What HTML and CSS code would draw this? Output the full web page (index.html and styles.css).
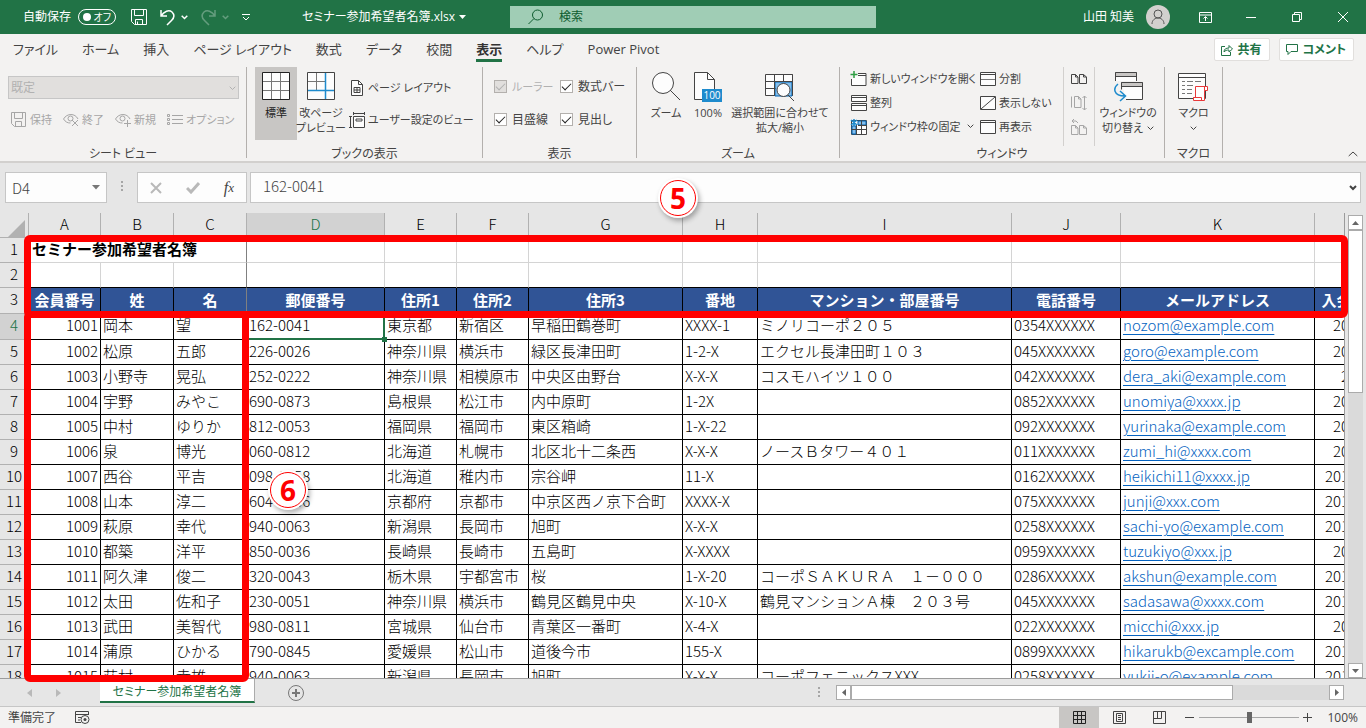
FILE: index.html
```
<!DOCTYPE html>
<html lang="ja">
<head>
    <meta charset="UTF-8">
    <meta name="viewport" content="width=device-width, initial-scale=1.0">
    <title>セミナー参加希望者名簿.xlsx</title>
    <link rel="stylesheet" href="styles.css">
</head>
<body>
    <!-- タイトルバー -->
    <header class="titlebar">
        <div class="quick">
            <label class="autosave">自動保存 <span class="toggle"><input type="checkbox"><span class="toggle-text">オフ</span></span></label>
            <button class="q-save" aria-label="上書き保存"><svg width="16" height="16" viewBox="0 0 16 16"><path d="M.5.5h15v15h-12l-3-3zM3.500.5v6h9v-6M4.500 15.500v-5h7v5M6.500 15v-2.500"/></svg></button>
            <button class="q-undo" aria-label="元に戻す"><svg width="15" height="17" viewBox="0 0 15 17"><path class="w" d="M1 1v6h6M1 7C4 2 9 .500 12 3c3 3 2 6-.500 8.500L7 16"/></svg></button>
            <button class="q-arrow" aria-label="元に戻す一覧"><svg width="7" height="5" viewBox="0 0 7 5"><path class="w" d="M.700.700l2.800 2.800L6.300.700"/></svg></button>
            <button class="q-redo dim" aria-label="やり直し" disabled><svg width="15" height="17" viewBox="0 0 15 17"><path class="w" d="M14 1v6H8M14 7C11 2 6 .500 3 3c-3 3-2 6 .500 8.500L8 16"/></svg></button>
            <button class="q-arrow dim" aria-label="やり直し一覧" disabled><svg width="7" height="5" viewBox="0 0 7 5"><path class="w" d="M.700.700l2.800 2.800L6.300.700"/></svg></button>
            <button class="q-custom" aria-label="クイックアクセスのカスタマイズ"><svg width="8" height="7" viewBox="0 0 8 7"><path d="M0 .500h8M1 3l3 3 3-3"/></svg></button>
        </div>
        <button class="filename">セミナー参加希望者名簿.xlsx <svg width="7" height="4" viewBox="0 0 7 4"><path class="solid" d="M0 0h7L3.500 4z"/></svg></button>
        <div class="search">
            <svg width="16" height="16" viewBox="0 0 16 16"><circle cx="9.500" cy="6" r="5"/><path d="M6 9.500L.500 15"/></svg>
            <input type="text" placeholder="検索" aria-label="検索">
        </div>
        <div class="window">
            <span class="user">山田 知美</span>
            <svg class="avatar" width="24" height="24" viewBox="0 0 24 24"><circle class="face" cx="12" cy="12" r="12"/><circle cx="12" cy="9" r="4"/><path d="M6 19c0-8 12-8 12 0"/></svg>
            <button aria-label="リボンの表示オプション"><svg width="13" height="11" viewBox="0 0 13 11"><path d="M.500.500h12v10H.500zM.500 3h12M6.500 9V5M4.500 6.500l2-2 2 2"/></svg></button>
            <button aria-label="最小化"><svg width="10" height="10" viewBox="0 0 10 10"><path d="M0 5.500h10"/></svg></button>
            <button aria-label="元に戻す(縮小)"><svg width="10" height="10" viewBox="0 0 10 10"><path d="M.500 2.500h7v7h-7zM2.500 2.500v-2h7v7h-2"/></svg></button>
            <button aria-label="閉じる"><svg width="10" height="10" viewBox="0 0 10 10"><path d="M0 0l10 10M10 0L0 10"/></svg></button>
        </div>
    </header>

    <!-- タブ -->
    <nav class="tabs">
        <a href="#">ファイル</a>
        <a href="#">ホーム</a>
        <a href="#">挿入</a>
        <a href="#">ページ レイアウト</a>
        <a href="#">数式</a>
        <a href="#">データ</a>
        <a href="#">校閲</a>
        <a href="#" class="active">表示</a>
        <a href="#">ヘルプ</a>
        <a href="#">Power Pivot</a>
        <div class="share">
            <button><svg width="12" height="12" viewBox="0 0 12 12"><path d="M4 2.500H.500v9h9V8M3 8c0-3 2-4 5-4V1.500L11.500 5 8 8V6C6 6 4 6.500 3 8z"/></svg>共有</button>
            <button><svg width="12" height="11" viewBox="0 0 12 11"><path d="M.500.500h11v7H5l-3 3v-3H.500z"/></svg>コメント</button>
        </div>
    </nav>

    <!-- リボン -->
    <section class="ribbon">
        <div class="group g-sheetview">
            <div class="group-body">
                <div class="select-box">
                    <select aria-label="シート ビュー" disabled><option>既定</option></select>
                    <svg width="7" height="5" viewBox="0 0 7 5"><path d="M.700.700l2.800 2.800L6.300.700"/></svg>
                </div>
                <div class="sv-buttons">
                    <button class="small" disabled><svg width="16" height="16" viewBox="0 0 16 16"><path d="M.500.500h14v14h-11l-3-3zM3.500.500v6h8v-6M4.500 14.500v-5h6v5"/></svg>保持</button>
                    <button class="small" disabled><svg width="16" height="14" viewBox="0 0 16 14"><path d="M.500 6C4 0 12 0 15 6M.500 6c2 3 4 4 7 4"/><circle cx="7.500" cy="5.500" r="2.500"/><path d="M9 7l6 6M15 7l-6 6"/></svg>終了</button>
                    <button class="small" disabled><svg width="16" height="14" viewBox="0 0 16 14"><path d="M.500 6C4 0 12 0 15 6M.500 6c2 3 4 4 7 4"/><circle cx="7.500" cy="5.500" r="2.500"/><path d="M12.500 7v7M9 10.500h7"/></svg>新規</button>
                    <button class="small" disabled><svg width="16" height="12" viewBox="0 0 16 12"><path d="M.500.500h2v2h-2zM.500 4.500h2v2h-2zM.500 8.500h2v2h-2zM5 1.500h11M5 5.500h11M5 9.500h11"/></svg>オプション</button>
                </div>
            </div>
            <h2>シート ビュー</h2>
        </div>

        <div class="group g-bookview">
            <div class="group-body">
                <button class="big on"><svg width="28" height="28" viewBox="0 0 28 28"><path class="paper" d="M.500.500h27v27H.500z"/><path class="thin" d="M9.500 1v26M18.500 1v26M1 9.500h26M1 18.500h26"/></svg><span>標準</span></button>
                <button class="big"><svg width="28" height="28" viewBox="0 0 28 28"><path class="paper" d="M.500.500h27v27H.500z"/><path class="thin" d="M9.500 1v17M1 9.500h17"/><path class="blue" d="M18.500 1v26M1 18.500h26"/></svg><span>改ページ<br>プレビュー</span></button>
                <div class="stack">
                    <button class="small"><svg width="16" height="16" viewBox="0 0 16 16"><path class="paper" d="M2.500.500h7l4 4v11h-11z"/><path d="M9.500.500v4h4M5 7.500h6v5H5zM8 7.500v5M5 10h6"/></svg>ページ レイアウト</button>
                    <button class="small"><svg width="16" height="16" viewBox="0 0 16 16"><path class="paper" d="M4.500 4.500h11v11h-11z"/><path d="M0 4.500h3M0 15.500h3M1.500 4.500v11M4.500 0v3M15.500 0v3M4.500 1.500h11M7 7h6v2H7z"/></svg>ユーザー設定のビュー</button>
                </div>
            </div>
            <h2>ブックの表示</h2>
        </div>

        <div class="group g-show">
            <div class="group-body">
                <label class="off"><input type="checkbox" checked disabled>ルーラー</label>
                <label><input type="checkbox" checked>数式バー</label>
                <label><input type="checkbox" checked>目盛線</label>
                <label><input type="checkbox" checked>見出し</label>
            </div>
            <h2>表示</h2>
        </div>

        <div class="group g-zoom">
            <div class="group-body">
                <button class="big"><svg width="30" height="30" viewBox="0 0 30 30"><circle class="paper" cx="12" cy="11" r="10.500"/><path d="M19 18l10 10"/></svg><span>ズーム</span></button>
                <button class="big"><svg width="28" height="30" viewBox="0 0 28 30"><path class="paper" d="M.500.500h13l7 7v20H.500z"/><path d="M13.500.500v7h7"/><path class="bluefill" d="M8 17h20v13H8z"/><text x="18" y="27" class="hundred">100</text></svg><span>100%</span></button>
                <button class="big"><svg width="30" height="28" viewBox="0 0 30 28"><path class="paper" d="M.500 1.500h27v21H.500z"/><path class="pale" d="M10 9h17v14H10z"/><path d="M9.500 1.500v21M18.500 1.500v7M.500 8.500h27M.500 15.500h10M27.500 1.500v21"/><circle class="paper" cx="18.500" cy="17" r="6.500"/><path d="M23 22l6 6"/></svg><span>選択範囲に合わせて<br>拡大/縮小</span></button>
            </div>
            <h2>ズーム</h2>
        </div>

        <div class="group g-window">
            <div class="group-body">
                <div class="stack3">
                    <button class="small"><svg width="17" height="16" viewBox="0 0 17 16"><path class="paper" d="M8 2.500h8v12H1.500V8"/><path d="M8 4.500h8"/><path class="green" d="M4 0v7M.500 3.500h7"/></svg>新しいウィンドウを開く</button>
                    <button class="small"><svg width="17" height="16" viewBox="0 0 17 16"><path class="paper" d="M1.500.500h15v6h-15zM1.500 8.500h15v7h-15z"/><path d="M1.500 2.500h15M1.500 10.500h15"/></svg>整列</button>
                    <button class="small"><svg width="17" height="16" viewBox="0 0 17 16"><path class="paper" d="M1.500 1.500h15v14h-15z"/><path class="pale" d="M8 2h8v4H8zM2 7h4v8H2z"/><path d="M6.500 6v10M11.500 1.500v14M8 6.500h8M1.500 10.500h15"/><path class="blue" d="M4 0v7M1 1l6 5M7 1L1 6"/></svg>ウィンドウ枠の固定<svg class="chev" width="7" height="5" viewBox="0 0 7 5"><path d="M.700.700l2.800 2.800L6.300.700"/></svg></button>
                </div>
                <div class="stack3 second">
                    <button class="small"><svg width="16" height="14" viewBox="0 0 16 14"><path class="paper" d="M.500.500h15v13H.500z"/><path d="M.500 2.500h15"/><path class="thin" d="M1 7.500h14"/></svg>分割</button>
                    <button class="small"><svg width="16" height="14" viewBox="0 0 16 14"><path class="paper" d="M.500.500h15v13H.500z"/><path d="M1 13L15 1"/></svg>表示しない</button>
                    <button class="small"><svg width="16" height="14" viewBox="0 0 16 14"><path class="paper" d="M.500.500h15v13H.500z"/><path d="M.500 2.500h15"/></svg>再表示</button>
                </div>
                <div class="side">
                    <button class="small" aria-label="並べて比較"><svg width="16" height="16" viewBox="0 0 16 16"><path d="M.500 3.500h4l2.500 2.500v6.500H.500zM4.500 3.500V6H7M8.500 3.500h4L15.500 6v6.500h-7zM12.500 3.500V6h3"/></svg></button>
                    <button class="small" aria-label="同時にスクロール" disabled><svg width="16" height="16" viewBox="0 0 16 16"><path d="M.500 1.500v11M3.500 1.500h4L10 4v8.500H3.500zM7.500 1.500V4H10M13.500 1v14M11.500 3l2-2 2 2M11.500 13l2 2 2-2"/></svg></button>
                    <button class="small" aria-label="ウィンドウの位置を元に戻す" disabled><svg width="16" height="16" viewBox="0 0 16 16"><path d="M.500 6.500h4L7 9v6.500H.500zM4.500 6.500V9H7M8.500 6.500h4L15.500 9v6.500h-7zM12.500 6.500V9h3M3 0L1 2l2 2M1 2h4l2 2"/></svg></button>
                </div>
                <button class="big"><svg width="30" height="30" viewBox="0 0 30 30"><path class="paper" d="M2.500 9V.500h21V9"/><path class="gray" d="M3 1h20v3H3z"/><path class="paper" d="M8.500 10.500h21v17H13"/><path class="gray" d="M9 11h20v3H9z"/><path d="M2.500.500h21M2.500 4.500h21M8.500 10.500h21M8.500 14.500h21M8.500 10.500v7"/><path class="blue" d="M5 12c-5 4-5 12 7 12M7 19l5.500 5L7 29"/></svg><span>ウィンドウの<br>切り替え<svg class="chev" width="7" height="5" viewBox="0 0 7 5"><path d="M.700.700l2.800 2.800L6.300.700"/></svg></span></button>
            </div>
            <h2>ウィンドウ</h2>
        </div>

        <div class="group g-macro">
            <div class="group-body">
                <button class="big"><svg width="30" height="30" viewBox="0 0 30 30"><path class="paper" d="M.500 1.500h27v25H.500z"/><path d="M.500 5.500h27"/><path class="thin" d="M4 9.500h3M9 9.500h6M17 9.500h6M4 13.500h3M9 13.500h6M4 17.500h3M9 17.500h5M4 21.500h3M9 21.500h5"/><path class="red" d="M17.500 14.500h12v4h-3v10h-11v-3h2zM15.500 25.500h8v3M26.500 18.500v-4"/></svg><span>マクロ</span><svg class="chev alone" width="7" height="5" viewBox="0 0 7 5"><path d="M.700.700l2.800 2.800L6.300.700"/></svg></button>
            </div>
            <h2>マクロ</h2>
        </div>
        <button class="collapse" aria-label="リボンを折りたたむ"><svg width="10" height="6" viewBox="0 0 10 6"><path d="M.700 5L5 1l4.300 4"/></svg></button>
    </section>

    <!-- 数式バー -->
    <section class="formula">
        <div class="namebox">
            <input type="text" value="D4" aria-label="名前ボックス">
            <button aria-label="名前の一覧"><svg width="8" height="5" viewBox="0 0 8 5"><path class="solid" d="M0 0h8L4 4.500z"/></svg></button>
        </div>
        <span class="dots"></span>
        <div class="fx">
            <button aria-label="キャンセル" disabled><svg width="12" height="12" viewBox="0 0 12 12"><path d="M1 1l10 10M11 1L1 11"/></svg></button>
            <button aria-label="入力" disabled><svg class="tick" width="14" height="12" viewBox="0 0 14 12"><path d="M1 6l4 4 8-9"/></svg></button>
            <button class="fx-label" aria-label="関数の挿入"><i>f</i><sub>x</sub></button>
        </div>
        <div class="value">
            <input type="text" value="162-0041" aria-label="数式バー">
            <button aria-label="数式バーの展開"><svg width="8" height="6" viewBox="0 0 8 6"><path d="M1 1l3 3 3-3"/></svg></button>
        </div>
    </section>

    <!-- シート -->
    <main class="workspace">
        <div class="sheet">
            <table>
                <colgroup>
                    <col class="c-row"><col class="c-a"><col class="c-b"><col class="c-b"><col class="c-d"><col class="c-a"><col class="c-a"><col class="c-g"><col class="c-h"><col class="c-i"><col class="c-j"><col class="c-k"><col class="c-l">
                </colgroup>
                <thead>
                    <tr><th class="corner"><svg width="17" height="17" viewBox="0 0 17 17"><path class="solid" d="M17 0v17H0z"/></svg></th><th>A</th><th>B</th><th>C</th><th class="current">D</th><th>E</th><th>F</th><th>G</th><th>H</th><th>I</th><th>J</th><th>K</th><th></th></tr>
                </thead>
                <tbody>
                    <tr class="blank"><th>1</th><td class="title" colspan="3">セミナー参加希望者名簿</td><td></td><td></td><td></td><td></td><td></td><td></td><td></td><td></td><td></td></tr>
                    <tr class="blank last"><th>2</th><td></td><td></td><td class="freeze"></td><td></td><td></td><td></td><td></td><td></td><td></td><td></td><td></td><td></td></tr>
                    <tr class="fields"><th>3</th><td>会員番号</td><td>姓</td><td class="freeze">名</td><td>郵便番号</td><td>住所1</td><td>住所2</td><td>住所3</td><td>番地</td><td>マンション・部屋番号</td><td>電話番号</td><td>メールアドレス</td><td>入会年月日</td></tr>
                    <tr class="first"><th class="current">4</th><td>1001</td><td>岡本</td><td>望</td><td class="selected">162-0041</td><td>東京都</td><td>新宿区</td><td>早稲田鶴巻町</td><td>XXXX-1</td><td>ミノリコーポ２０５</td><td>0354XXXXXX</td><td><a href="#">nozom@example.com</a></td><td>2010/4/10</td></tr>
                    <tr><th>5</th><td>1002</td><td>松原</td><td>五郎</td><td>226-0026</td><td>神奈川県</td><td>横浜市</td><td>緑区長津田町</td><td>1-2-X</td><td>エクセル長津田町１０３</td><td>045XXXXXXX</td><td><a href="#">goro@example.com</a></td><td>2010/4/12</td></tr>
                    <tr><th>6</th><td>1003</td><td>小野寺</td><td>晃弘</td><td>252-0222</td><td>神奈川県</td><td>相模原市</td><td>中央区由野台</td><td>X-X-X</td><td>コスモハイツ１００</td><td>042XXXXXXX</td><td><a href="#">dera_aki@example.com</a></td><td>2010/5/6</td></tr>
                    <tr><th>7</th><td>1004</td><td>宇野</td><td>みやこ</td><td>690-0873</td><td>島根県</td><td>松江市</td><td>内中原町</td><td>1-2X</td><td></td><td>0852XXXXXX</td><td><a href="#">unomiya@xxxx.jp</a></td><td>2010/5/20</td></tr>
                    <tr><th>8</th><td>1005</td><td>中村</td><td>ゆりか</td><td>812-0053</td><td>福岡県</td><td>福岡市</td><td>東区箱崎</td><td>1-X-22</td><td></td><td>092XXXXXXX</td><td><a href="#">yurinaka@example.com</a></td><td>2010/6/14</td></tr>
                    <tr><th>9</th><td>1006</td><td>泉</td><td>博光</td><td>060-0812</td><td>北海道</td><td>札幌市</td><td>北区北十二条西</td><td>X-X-X</td><td>ノースＢタワー４０１</td><td>011XXXXXXX</td><td><a href="#">zumi_hi@xxxx.com</a></td><td>2010/7/22</td></tr>
                    <tr><th>10</th><td>1007</td><td>西谷</td><td>平吉</td><td>098-6758</td><td>北海道</td><td>稚内市</td><td>宗谷岬</td><td>11-X</td><td></td><td>0162XXXXXX</td><td><a href="#">heikichi11@xxxx.jp</a></td><td>2010/10/12</td></tr>
                    <tr><th>11</th><td>1008</td><td>山本</td><td>淳二</td><td>604-8366</td><td>京都府</td><td>京都市</td><td>中京区西ノ京下合町</td><td>XXXX-X</td><td></td><td>075XXXXXXX</td><td><a href="#">junji@xxx.com</a></td><td>2010/10/25</td></tr>
                    <tr><th>12</th><td>1009</td><td>萩原</td><td>幸代</td><td>940-0063</td><td>新潟県</td><td>長岡市</td><td>旭町</td><td>X-X-X</td><td></td><td>0258XXXXXX</td><td><a href="#">sachi-yo@example.com</a></td><td>2010/11/15</td></tr>
                    <tr><th>13</th><td>1010</td><td>都築</td><td>洋平</td><td>850-0036</td><td>長崎県</td><td>長崎市</td><td>五島町</td><td>X-XXXX</td><td></td><td>0959XXXXXX</td><td><a href="#">tuzukiyo@xxx.jp</a></td><td>2010/12/6</td></tr>
                    <tr><th>14</th><td>1011</td><td>阿久津</td><td>俊二</td><td>320-0043</td><td>栃木県</td><td>宇都宮市</td><td>桜</td><td>1-X-20</td><td>コーポＳＡＫＵＲＡ　１－０００</td><td>0286XXXXXX</td><td><a href="#">akshun@example.com</a></td><td>2010/12/17</td></tr>
                    <tr><th>15</th><td>1012</td><td>太田</td><td>佐和子</td><td>230-0051</td><td>神奈川県</td><td>横浜市</td><td>鶴見区鶴見中央</td><td>X-10-X</td><td>鶴見マンションＡ棟　２０３号</td><td>045XXXXXXX</td><td><a href="#">sadasawa@xxxx.com</a></td><td>2010/12/20</td></tr>
                    <tr><th>16</th><td>1013</td><td>武田</td><td>美智代</td><td>980-0811</td><td>宮城県</td><td>仙台市</td><td>青葉区一番町</td><td>X-4-X</td><td></td><td>022XXXXXXX</td><td><a href="#">micchi@xxx.jp</a></td><td>2011/1/17</td></tr>
                    <tr><th>17</th><td>1014</td><td>蒲原</td><td>ひかる</td><td>790-0845</td><td>愛媛県</td><td>松山市</td><td>道後今市</td><td>155-X</td><td></td><td>0899XXXXXX</td><td><a href="#">hikarukb@excample.com</a></td><td>2011/10/11</td></tr>
                    <tr><th>18</th><td>1015</td><td>荻村</td><td>幸雄</td><td>940-0063</td><td>新潟県</td><td>長岡市</td><td>旭町</td><td>X-X-X</td><td>コーポフェニックスXXX</td><td>0258XXXXXX</td><td><a href="#">yukii-o@example.com</a></td><td>2011/10/24</td></tr>
                </tbody>
            </table>
        </div>
        <div class="vscroll">
            <button aria-label="上へ"><svg width="7" height="4" viewBox="0 0 7 4"><path class="solid" d="M0 4h7L3.500 0z"/></svg></button>
            <div class="track"><div class="thumb"></div></div>
            <button aria-label="下へ"><svg width="7" height="4" viewBox="0 0 7 4"><path class="solid" d="M0 0h7L3.500 4z"/></svg></button>
        </div>
        <div class="frame frame-rows"></div>
        <div class="frame frame-cols"></div>
        <span class="badge badge-5">5</span>
        <span class="badge badge-6">6</span>
    </main>

    <!-- シート見出し -->
    <div class="sheetbar">
        <div class="sheet-nav">
            <button aria-label="前のシート" disabled><svg width="5" height="8" viewBox="0 0 5 8"><path class="solid" d="M5 0v8L0 4z"/></svg></button>
            <button aria-label="次のシート" disabled><svg width="5" height="8" viewBox="0 0 5 8"><path class="solid" d="M0 0v8l5-4z"/></svg></button>
        </div>
        <button class="sheet-tab">セミナー参加希望者名簿</button>
        <button class="add" aria-label="新しいシート"><svg width="16" height="16" viewBox="0 0 16 16"><circle cx="8" cy="8" r="7.500"/><path class="plus" d="M8 4v8M4 8h8"/></svg></button>
        <span class="dots"></span>
        <div class="hscroll">
            <button aria-label="左へ"><svg width="4" height="7" viewBox="0 0 4 7"><path class="solid" d="M4 0v7L0 3.500z"/></svg></button>
            <div class="track"><div class="thumb"></div></div>
            <button aria-label="右へ"><svg width="4" height="7" viewBox="0 0 4 7"><path class="solid" d="M0 0v7l4-3.500z"/></svg></button>
        </div>
    </div>

    <!-- ステータスバー -->
    <footer class="status">
        <span>準備完了</span>
        <button class="record" aria-label="マクロの記録"><svg width="15" height="13" viewBox="0 0 15 13"><path d="M6 11.500H.500V.500h13V4M.500 3.500h13M3 6.500h3M3 9h2"/><circle cx="10" cy="8.500" r="4"/><circle class="solid" cx="10" cy="8.500" r="1.500"/></svg></button>
        <div class="views">
            <button class="on" aria-label="標準"><svg width="13" height="13" viewBox="0 0 13 13"><path d="M.500.500h12v12H.500zM4.500 0v13M8.500 0v13M0 4.500h13M0 8.500h13"/></svg></button>
            <button aria-label="ページ レイアウト"><svg width="13" height="13" viewBox="0 0 13 13"><path d="M.500.500h12v12H.500zM3.500 2.500h6v8h-6zM5 4.500h3M5 6.500h3M5 8.500h3"/></svg></button>
            <button aria-label="改ページ プレビュー"><svg width="13" height="13" viewBox="0 0 13 13"><path d="M.500.500h12v12H.500zM4.500.500v7M8.500.500v7M.500 7.500h8"/></svg></button>
        </div>
        <div class="zoombar">
            <button aria-label="縮小"><svg width="9" height="9" viewBox="0 0 9 9"><path d="M0 4.500h9"/></svg></button>
            <input type="range" min="0" max="100" value="50" aria-label="ズーム">
            <button aria-label="拡大"><svg width="9" height="9" viewBox="0 0 9 9"><path d="M0 4.500h9M4.500 0v9"/></svg></button>
            <span>100%</span>
        </div>
    </footer>
</body>
</html>
```

FILE: styles.css
```
* {
    box-sizing: border-box;
}
body {
    margin: 0;
    height: 100vh;
    display: flex;
    flex-direction: column;
    overflow: hidden;
    font-family: "Open Sans", "Noto Sans CJK JP", sans-serif;
    font-size: 12px;
    line-height: 16px;
    font-feature-settings: "palt";
    color: #444444;
    background-color: #e6e6e6;
}
button {
    font: inherit;
    font-feature-settings: inherit;
    color: inherit;
    background: none;
    border: none;
    padding: 0;
    display: flex;
    align-items: center;
    justify-content: center;
    white-space: nowrap;
}
input, select {
    font: inherit;
    color: inherit;
    border: none;
    margin: 0;
    padding: 0;
    background: none;
}
svg {
    flex: none;
    fill: none;
    stroke: currentColor;
    stroke-width: 1px;
}
.solid {
    fill: currentColor;
    stroke: none;
}
.w {
    stroke-width: 1.5px;
}

/* タイトルバー */
.titlebar {
    flex: none;
    height: 34px;
    display: grid;
    grid-template-columns: 302px 208px minmax(200px, 366px) 1fr;
    align-items: center;
    background-color: #217346;
    color: #ffffff;
}
.quick {
    display: flex;
    align-items: center;
    padding-left: 23px;
}
.autosave {
    display: flex;
    align-items: center;
    gap: 7px;
}
.toggle {
    display: flex;
    align-items: center;
    width: 38px;
    height: 16px;
    padding: 0 4px;
    border: 1px solid #ffffff;
    border-radius: 8px;
    font-size: 10px;
}
.toggle input {
    appearance: none;
    width: 8px;
    height: 8px;
    border-radius: 4px;
    background-color: #ffffff;
}
.toggle-text {
    margin-left: auto;
}
.q-save {
    margin-left: 15px;
}
.q-undo, .q-redo {
    margin-left: 13px;
}
.q-arrow {
    margin-left: 6px;
}
.q-custom {
    margin-left: 13px;
}
.dim {
    opacity: 0.3;
}
.filename {
    justify-content: flex-start;
    gap: 4px;
}
.search {
    display: flex;
    align-items: center;
    gap: 15px;
    height: 22px;
    padding-left: 18px;
    background-color: #a0cdb5;
    color: #0e5c2f;
}
.search input {
    flex: 1;
    min-width: 0;
}
.search input::placeholder {
    color: #0e5c2f;
    opacity: 1;
}
.window {
    display: flex;
    justify-content: flex-end;
    align-items: center;
}
.window button {
    width: 46px;
    height: 34px;
}
.avatar {
    margin: 0 12px;
    color: #555555;
}
.avatar .face {
    fill: #d2d0ce;
    stroke: none;
}

/* タブ */
.tabs {
    flex: none;
    height: 30px;
    display: flex;
    gap: 24px;
    padding: 0 12px 0 13px;
    background-color: #f3f2f1;
    font-size: 13px;
}
.tabs a {
    height: 28px;
    line-height: 30px;
    color: #444444;
    text-decoration: none;
    white-space: nowrap;
}
.tabs a.active {
    font-weight: bold;
    color: #333333;
    border-bottom: 3px solid #217346;
}
.share {
    display: flex;
    gap: 9px;
    margin: 4px 0 0 auto;
}
.share button {
    height: 23px;
    padding: 0 7px 0 6px;
    gap: 5px;
    background-color: #ffffff;
    border: 1px solid #e1dfdd;
    border-radius: 2px;
    font-size: 12px;
    font-weight: bold;
    color: #217346;
}

/* リボン */
.ribbon {
    flex: none;
    position: relative;
    display: flex;
    height: 99px;
    padding-top: 3px;
    background-color: #f3f2f1;
    border-bottom: 2px solid #d2d0ce;
}
.group {
    display: flex;
    flex-direction: column;
    height: 91px;
    border-right: 1px solid #b3b0ad;
}
.group-body {
    flex: 1;
    display: flex;
}
.group h2 {
    margin: 0 0 -4px;
    font-size: 12px;
    font-weight: normal;
    line-height: 16px;
    text-align: center;
}
.g-sheetview {
    width: 247px;
}
.g-bookview {
    width: 236px;
}
.g-show {
    width: 154px;
}
.g-zoom {
    width: 203px;
}
.g-window {
    width: 325px;
}
.g-macro {
    width: 58px;
}
.small {
    gap: 3px;
    height: 24px;
    font-size: 11px;
}
.small:disabled {
    color: #a6a6a6;
}
.big {
    flex-direction: column;
    justify-content: flex-start;
    height: 73px;
    padding-top: 5px;
    font-size: 11px;
    line-height: 15px;
}
.big > svg:first-child {
    margin-bottom: 5px;
}
.big.on {
    background-color: #c8c6c4;
    color: #222222;
}
.paper {
    fill: #fdfdfd;
}
.thin {
    stroke: #777777;
}
.blue {
    stroke: #1e8bcd;
    stroke-width: 1.5px;
}
.bluefill {
    fill: #1e8bcd;
    stroke: none;
}
.pale {
    fill: #83beec;
    stroke: #0063b1;
}
.gray {
    fill: #c8c6c4;
    stroke: none;
}
.green {
    stroke: #2f9e44;
    stroke-width: 1.5px;
}
.red {
    fill: #ffffff;
    stroke: #e8393a;
}
.hundred {
    fill: #ffffff;
    stroke: none;
    font-size: 10px;
    text-anchor: middle;
}
.chev {
    margin: 0 0 1px 4px;
}
.chev.alone {
    margin: 6px 0 0;
}
.g-sheetview .group-body {
    flex-direction: column;
    padding: 9px 7px 0 8px;
}
.select-box {
    position: relative;
    display: flex;
    color: #b1b1b1;
}
.select-box select {
    flex: 1;
    height: 23px;
    padding: 0 2px;
    appearance: none;
    border: 1px solid #c6c6c6;
    background-color: #e1dfdd;
    opacity: 1;
}
.select-box svg {
    position: absolute;
    top: 10px;
    right: 3px;
}
.sv-buttons {
    display: flex;
    gap: 11px;
    padding: 9px 0 0 3px;
}
.g-bookview .group-body {
    padding-left: 8px;
}
.g-bookview .big {
    width: 42px;
}
.g-bookview .big + .big {
    margin-left: 3px;
}
.stack {
    display: flex;
    flex-direction: column;
    align-items: flex-start;
    gap: 8px;
    padding: 9px 0 0 7px;
}
.g-show .group-body {
    display: grid;
    grid-template-columns: 66px 1fr;
    grid-template-rows: 33px 33px;
    padding: 3px 0 0 11px;
}
.g-show label {
    display: flex;
    align-items: center;
    gap: 5px;
    white-space: nowrap;
}
.g-show label.off {
    font-size: 11px;
    color: #b1b1b1;
}
.g-show input {
    appearance: none;
    width: 13px;
    height: 13px;
    border: 1px solid #b3b0ad;
    background-color: #ffffff;
    display: grid;
    place-items: center;
    color: #222222;
}
.g-show input:checked::before {
    content: "";
    width: 8px;
    height: 4px;
    margin-bottom: 2px;
    border: solid currentColor;
    border-width: 0 0 1px 1px;
    transform: rotate(-45deg);
}
.g-show input:disabled {
    background-color: #e1dfdd;
    color: #b1b1b1;
}
.g-zoom .group-body {
    justify-content: flex-start;
    padding-left: 8px;
}
.g-zoom .big {
    width: 42px;
}
.g-zoom .big:last-child {
    width: 102px;
}
.g-zoom .big > svg:first-child, .g-window .big > svg:first-child, .g-macro .big > svg:first-child {
    height: 30px;
    margin-bottom: 3px;
}
.g-window .group-body {
    padding-left: 10px;
}
.stack3, .side {
    display: flex;
    flex-direction: column;
    align-items: flex-start;
}
.stack3 {
    width: 130px;
}
.stack3.second {
    width: 83px;
}
.side {
    padding: 0 7px;
    margin-right: 5px;
    border: solid #d2d0ce;
    border-width: 0 1px;
}
.g-window .big {
    width: 56px;
}
.g-macro .group-body {
    justify-content: center;
}
.collapse {
    position: absolute;
    right: 8px;
    bottom: 4px;
}

/* 数式バー */
.formula {
    flex: none;
    display: flex;
    height: 50px;
    padding: 9px 5px 10px;
}
.formula > div {
    display: flex;
    align-items: center;
    background-color: #fdfdfd;
    border: 1px solid #c6c6c6;
}
.formula input {
    flex: 1;
    min-width: 0;
    font-family: "Noto Sans CJK JP", sans-serif;
    font-size: 15px;
    font-weight: 300;
    color: #444444;
}
.namebox {
    width: 102px;
    padding: 0 6px;
}
.namebox button {
    color: #777777;
}
.dots {
    width: 2px;
    height: 11px;
    background: repeating-linear-gradient(#a6a6a6 0 2px, transparent 2px 4px);
}
.formula .dots {
    margin: 9px 14px 0;
}
.fx {
    width: 110px;
    margin-right: 3px;
    justify-content: space-around;
}
.fx button:disabled {
    color: #b9b9b9;
}
.fx svg {
    stroke-width: 2px;
}
.fx .tick {
    stroke-width: 3px;
}
.fx-label {
    font-family: "Liberation Serif", serif;
    font-size: 16px;
    font-style: italic;
}
.fx-label sub {
    font-size: 13px;
}
.value {
    flex: 1;
    padding: 0 3px 0 12px;
}
.value input {
    padding-bottom: 3px;
}
.value svg {
    stroke-width: 2px;
}

/* シート */
.workspace {
    flex: 1;
    min-height: 0;
    position: relative;
    display: flex;
    justify-content: space-between;
}
.sheet {
    flex: 1;
    min-width: 0;
    overflow: hidden;
    border-right: 1px solid #9b9b9b;
}
.sheet table {
    width: 1407px;
    table-layout: fixed;
    border-collapse: separate;
    border-spacing: 0;
    font-family: "Noto Sans CJK JP", sans-serif;
    font-size: 15px;
    font-weight: 300;
    font-feature-settings: normal;
    line-height: 24px;
    color: #000000;
}
.c-row {
    width: 29px;
}
.c-a {
    width: 72px;
}
.c-b {
    width: 73px;
}
.c-d {
    width: 138px;
}
.c-g {
    width: 154px;
}
.c-h {
    width: 75px;
}
.c-i {
    width: 254px;
}
.c-j {
    width: 109px;
}
.c-k {
    width: 194px;
}
.c-l {
    width: 92px;
}
th, td {
    height: 25px;
    padding: 0 2px;
    border-right: 1px solid #000000;
    border-bottom: 1px solid #000000;
    white-space: nowrap;
    overflow: hidden;
}
th {
    padding: 0;
    font-weight: inherit;
    line-height: 22px;
    vertical-align: top;
    background-color: #e6e6e6;
    border-color: #b1b1b1;
}
th.current {
    background-color: #d2d2d2;
    color: #217346;
}
th.corner {
    padding-right: 3px;
    text-align: right;
    color: #b1b1b1;
    line-height: 0;
    vertical-align: bottom;
}
td {
    line-height: 22px;
    vertical-align: top;
    background-color: #ffffff;
}
tbody td:nth-child(2), tbody td:nth-child(13) {
    text-align: right;
}
tbody td:nth-child(13) {
    padding-right: 5px;
}
.blank td {
    border-color: #d4d4d4;
}
.blank.last td {
    border-bottom-color: #000000;
}
.blank td.title {
    text-align: left;
    font-weight: bold;
    padding-left: 3px;
    border-right-color: #808080;
}
.blank td.freeze, .fields td.freeze {
    border-right-color: #808080;
}
.fields td {
    height: 26px;
    line-height: 24px;
    background-color: #305496;
    color: #ffffff;
    font-weight: bold;
}
tbody .fields td:nth-child(n) {
    text-align: center;
}
.first td {
    height: 26px;
}
td.selected {
    position: relative;
    overflow: visible;
}
td.selected::before {
    content: "";
    position: absolute;
    inset: -1px;
    border: 2px solid #217346;
}
td.selected::after {
    content: "";
    position: absolute;
    right: -3px;
    bottom: -3px;
    width: 5px;
    height: 5px;
    background-color: #217346;
}
td a {
    color: #0563c1;
    text-underline-offset: 3px;
}
.vscroll {
    display: flex;
    flex-direction: column;
    width: 15px;
    margin: 2px 3px 0;
}
.vscroll button, .hscroll button {
    width: 15px;
    height: 15px;
    background-color: #ffffff;
    border: 1px solid #ababab;
    color: #666666;
}
.track {
    flex: 1;
    background-color: #dadada;
}
.thumb {
    background-color: #ffffff;
    border: 1px solid #ababab;
}
.vscroll .thumb {
    height: 163px;
}

/* 注釈 */
.frame {
    position: absolute;
    border: 7px solid #ff0000;
    border-radius: 6px;
}
.frame-rows {
    top: 22px;
    left: 24px;
    right: 18px;
    height: 83px;
}
.frame-cols {
    top: 98px;
    left: 24px;
    width: 225px;
    bottom: -4px;
}
.badge {
    position: absolute;
    width: 36px;
    height: 36px;
    border: 1px solid #ff0000;
    border-radius: 18px;
    background-color: #ffffff;
    box-shadow: 0 0 0 2px #ffffff, 2px 3px 5px 2px rgba(0, 0, 0, 0.3);
    font-family: "Noto Sans", sans-serif;
    font-size: 28px;
    font-weight: bold;
    line-height: 34px;
    text-align: center;
    color: #ff0000;
}
.badge-5 {
    top: -33px;
    left: 660px;
}
.badge-6 {
    top: 259px;
    left: 270px;
}

/* シート見出し */
.sheetbar {
    flex: none;
    display: flex;
    align-items: center;
    height: 28px;
    border-top: 1px solid #9b9b9b;
}
.sheet-nav {
    display: flex;
    gap: 24px;
    width: 100px;
    padding-left: 27px;
}
.sheet-nav button:disabled {
    color: #b9b9b9;
}
.sheet-tab {
    align-self: flex-start;
    width: 155px;
    height: 24px;
    padding-top: 4px;
    background-color: #ffffff;
    border-right: 1px solid #ababab;
    border-bottom: 2px solid #217346;
    color: #217346;
}
.add {
    margin-left: 33px;
    color: #777777;
}
.plus {
    stroke-width: 2px;
}
.sheetbar .dots {
    margin: 0 16px 0 auto;
}
.hscroll {
    display: flex;
    width: 508px;
    margin-right: 22px;
}
.hscroll .thumb {
    width: 80%;
    height: 15px;
}

/* ステータスバー */
.status {
    flex: none;
    display: flex;
    align-items: center;
    height: 22px;
    padding: 0 8px;
    background-color: #f3f2f1;
    border-top: 1px solid #c6c6c6;
}
.record {
    margin-left: 19px;
}
.views {
    display: flex;
    margin-left: auto;
}
.views button {
    width: 40px;
    height: 21px;
}
.views .on {
    background-color: #c8c6c4;
    color: #222222;
}
.zoombar {
    display: flex;
    align-items: center;
    margin-left: 6px;
}
.zoombar input {
    appearance: none;
    width: 100px;
    height: 12px;
    margin: 0 4px 0 5px;
    background: linear-gradient(#a6a6a6, #a6a6a6) no-repeat center / 100% 1px;
}
.zoombar input::-webkit-slider-thumb {
    appearance: none;
    width: 5px;
    height: 11px;
    background-color: #666666;
}
.zoombar span {
    width: 46px;
    text-align: right;
}
```
